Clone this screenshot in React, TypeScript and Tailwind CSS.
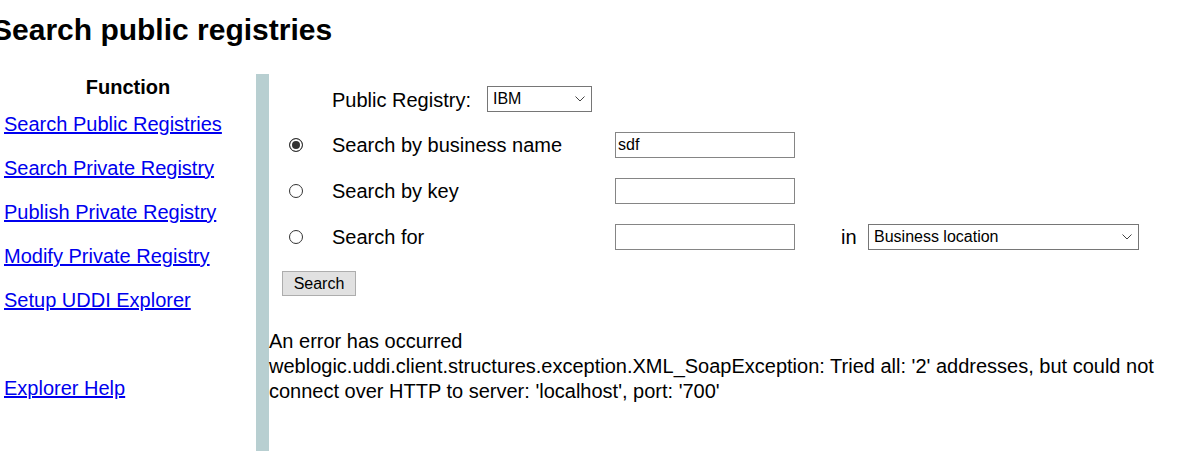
import React from "react";

function Chevron() {
  return (
    <svg width="10" height="6" viewBox="0 0 10 6" fill="none" stroke="#444" strokeWidth="1">
      <path d="M0.5 0.5 L5 5 L9.5 0.5" />
    </svg>
  );
}

function FakeSelect({ value, width }: { value: string; width: string }) {
  return (
    <div
      className={`${width} h-[26px] flex items-center justify-between border border-[#767676] bg-white pl-[5px] pr-[6px] text-[16px] leading-none text-black`}
    >
      <span className="pb-[1px]">{value}</span>
      <Chevron />
    </div>
  );
}

const links = [
  "Search Public Registries",
  "Search Private Registry",
  "Publish Private Registry",
  "Modify Private Registry",
  "Setup UDDI Explorer",
];

export default function App() {
  return (
    <div className="w-[1192px] h-[471px] overflow-hidden bg-white text-black font-['Liberation_Sans',Arial,sans-serif] text-[20px]">
      <h1 className="h-[74px] pt-[13px] ml-[-8px] text-[30px] leading-[34px] font-bold">
        Search public registries
      </h1>
      <div className="flex h-[377px]">
        {/* left menu */}
        <div className="w-[256px] shrink-0">
          <div className="text-center font-bold leading-[26px]">Function</div>
          <div className="mt-[2px]">
            {links.map((l) => (
              <div key={l} className="leading-[44px] pl-[4px]">
                <a href="#" className="text-[#0000ee] underline">
                  {l}
                </a>
              </div>
            ))}
            <div className="h-[44px]" />
            <div className="leading-[44px] pl-[4px]">
              <a href="#" className="text-[#0000ee] underline">
                Explorer Help
              </a>
            </div>
          </div>
        </div>

        <div className="w-[13px] shrink-0 bg-[#b8cfd1]" />

        {/* form */}
        <div className="flex-1">
          <div className="mt-[4px] h-[44px] flex items-center">
            <div className="w-[63px]" />
            <div className="w-[155px]">Public Registry:</div>
            <div className="mt-[-2px]">
              <FakeSelect value="IBM" width="w-[105px] h-[24px]" />
            </div>
          </div>

          {[
            { label: "Search by business name", value: "sdf", checked: true },
            { label: "Search by key", value: "", checked: false },
            { label: "Search for", value: "", checked: false, extra: true },
          ].map((r) => (
            <div key={r.label} className="h-[46px] flex items-center">
              <div className="w-[63px] flex pl-[20px]">
                <input
                  type="radio"
                  name="mode"
                  defaultChecked={r.checked}
                  className="m-0 w-[14px] h-[14px] appearance-none rounded-full border border-[#333] bg-white checked:bg-[#333] checked:shadow-[inset_0_0_0_2px_#fff]"
                />
              </div>
              <div className="w-[283px]">{r.label}</div>
              <input
                type="text"
                defaultValue={r.value}
                className="w-[180px] h-[26px] border border-[#858585] px-[2px] text-[16px] outline-none"
              />
              {r.extra && (
                <>
                  <div className="ml-[46px] w-[27px]">in</div>
                  <FakeSelect value="Business location" width="w-[271px]" />
                </>
              )}
            </div>
          ))}

          <div className="mt-[11px] pl-[13px] flex">
            <button className="w-[74px] h-[25px] border border-[#adadad] bg-[#e1e1e1] text-[16px] leading-none">
              Search
            </button>
          </div>

          <div className="mt-[33px] leading-[25px]">
            An error has occurred
            <br />
            weblogic.uddi.client.structures.exception.XML_SoapException: Tried all: '2' addresses, but could not
            connect over HTTP to server: 'localhost', port: '700'
          </div>
        </div>
      </div>
    </div>
  );
}
